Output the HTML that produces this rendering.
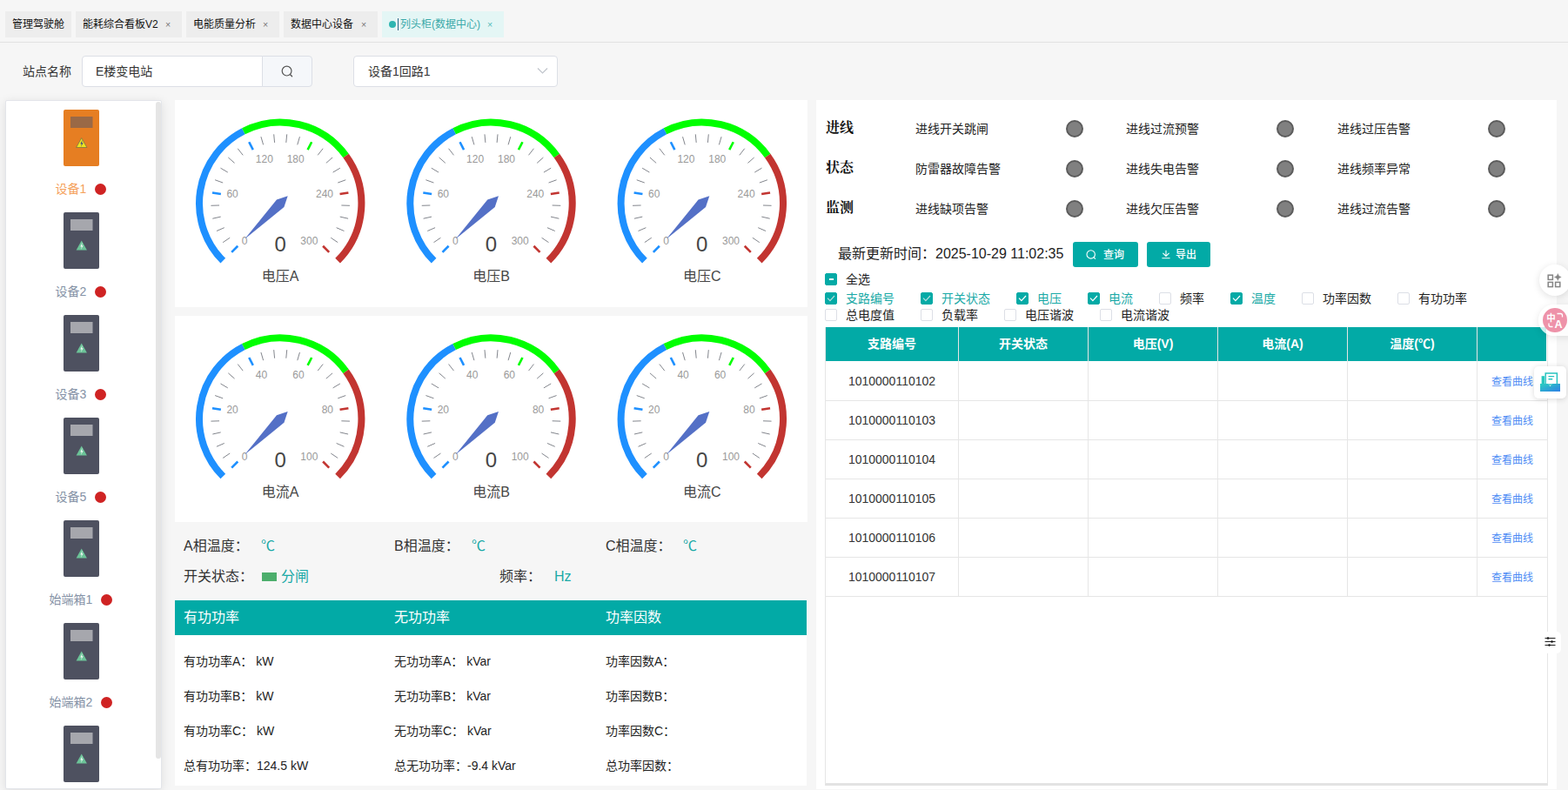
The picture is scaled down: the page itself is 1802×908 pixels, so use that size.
<!DOCTYPE html>
<html lang="zh-CN"><head><meta charset="utf-8"><title>列头柜(数据中心)</title>
<style>
*{box-sizing:border-box;margin:0;padding:0}
html,body{width:1802px;height:908px;overflow:hidden;background:#f6f6f6}
body{position:relative;font-family:"Liberation Sans","Noto Sans CJK SC",sans-serif;font-size:14px;color:#333}
.abs{position:absolute}
.t{position:absolute;white-space:nowrap}
.tab{position:absolute;top:13px;height:30px;line-height:30px;background:#ededed;font-size:12px;color:#111;padding-left:8px;white-space:nowrap}
.tab b{font-weight:normal;color:#777;position:absolute;top:0;font-size:10.5px}
.panel{position:absolute;background:#fff}
.dl{position:absolute;left:7px;width:172px;height:21px;line-height:21px;font-size:14px;text-align:center;white-space:nowrap}
.dl span{display:inline-block;vertical-align:middle}
.dl i{display:inline-block;width:13px;height:13px;border-radius:50%;background:#cf2323;margin-left:10px;vertical-align:middle}
.lamp{position:absolute;width:20px;height:20px;border-radius:50%;background:#808080;border:2px solid #5c5c5c}
.cb{position:absolute;width:14px;height:14px;border:1px solid #dcdfe6;border-radius:2px;background:#fff}
.cb.on{background:#02aaa6;border-color:#02aaa6}
.cl{position:absolute;font-size:14px;line-height:20px;height:20px;white-space:nowrap;color:#222}
.cl.on{color:#1aa9a6}
.btn{position:absolute;top:278px;height:29px;background:#02aaa6;border-radius:3px;color:#fff;font-size:12px;font-weight:500;line-height:31px;white-space:nowrap}
.th{position:absolute;top:376px;height:39px;line-height:39px;color:#fff;font-weight:bold;font-size:14px;text-align:center;background:#02aaa6}
.td{position:absolute;height:45px;line-height:44px;text-align:center;font-size:14px;color:#333;border-right:1px solid #e6e6e6;border-bottom:1px solid #e6e6e6;background:#fff}
.lk{color:#4d8cf5;font-size:12px}
</style></head><body>

<div class="abs" style="left:0;top:48px;width:1802px;height:1px;background:#e2e2e2"></div>
<div class="tab" style="left:6px;width:76px">管理驾驶舱</div>
<div class="tab" style="left:87px;width:122px">能耗综合看板V2<b style="left:103px">×</b></div>
<div class="tab" style="left:214px;width:107px">电能质量分析<b style="left:88px">×</b></div>
<div class="tab" style="left:326px;width:108px">数据中心设备<b style="left:89px">×</b></div>
<div class="tab" style="left:439px;width:140px;background:#e4f6f5;color:#3aa9a9;padding-left:21px"><span class="abs" style="left:8px;top:11px;width:8px;height:8px;border-radius:50%;background:#2fb5b1"></span><span class="abs" style="left:18px;top:8px;width:1px;height:14px;background:#1d6080;box-shadow:0 0 0 .6px rgba(255,255,255,.9)"></span>列头柜(数据中心)<b style="left:121px;color:#5bb">×</b></div>
<div class="t" style="left:26px;top:72px;height:20px;line-height:20px;font-size:14px;color:#333">站点名称</div>
<div class="abs" style="left:94px;top:64px;width:208px;height:36px;background:#fff;border:1px solid #dcdfe6;border-radius:4px 0 0 4px"></div>
<div class="t" style="left:110px;top:72px;height:20px;line-height:20px;font-size:14px;color:#333">E楼变电站</div>
<div class="abs" style="left:301px;top:64px;width:58px;height:36px;background:#f5f7fa;border:1px solid #dcdfe6;border-radius:0 4px 4px 0"></div>
<svg class="abs" style="left:322px;top:74px" width="16" height="16" viewBox="0 0 16 16"><circle cx="7.6" cy="7.6" r="5.4" fill="none" stroke="#555" stroke-width="1.2"/><path d="M11.6 11.8L13.6 13.8" stroke="#555" stroke-width="1.3" stroke-linecap="round"/></svg>
<div class="abs" style="left:406px;top:64px;width:235px;height:36px;background:#fff;border:1px solid #dcdfe6;border-radius:4px"></div>
<div class="t" style="left:423px;top:72px;height:20px;line-height:20px;font-size:14px;color:#333">设备1回路1</div>
<svg class="abs" style="left:617px;top:77px" width="13" height="9" viewBox="0 0 13 9"><path d="M1 1.5L6.5 7L12 1.5" fill="none" stroke="#c0c4cc" stroke-width="1.2"/></svg>
<div class="panel" style="left:6px;top:115px;width:180px;height:792px;border:1px solid #e3e5ea;border-radius:2px;box-shadow:0 2px 12px rgba(0,0,0,.1)"></div>
<div class="abs" style="left:179px;top:117px;width:6px;height:755px;background:#e5e5e5;border-radius:3px"></div>
<svg style="position:absolute;left:73px;top:126px" width="41" height="65" viewBox="0 0 41 65"><rect width="41" height="65" rx="2" fill="#e67e22"/><rect x="8" y="8" width="25.5" height="13" fill="#9a6946"/><path d="M20.7 32.6L26.9 43.5H14.6Z" fill="#efe41f" stroke="#6b6b4a" stroke-width="0.7" stroke-linejoin="round"/><path d="M21.6 34.8L19.3 39.6H20.9L19.9 42.9L22.6 38.2H21.1Z" fill="#3b4a8c"/></svg><div class="dl" style="top:206px;color:#f5a15b"><span>设备1</span><i></i></div>
<svg style="position:absolute;left:73px;top:244px" width="41" height="65" viewBox="0 0 41 65"><rect width="41" height="65" rx="2" fill="#4e5160"/><rect x="8" y="8" width="25.5" height="13" fill="#a6a7ad"/><path d="M20.7 32.6L26.9 43.5H14.6Z" fill="#6cc398" stroke="none" stroke-width="0.7" stroke-linejoin="round"/><path d="M21.6 34.8L19.3 39.6H20.9L19.9 42.9L22.6 38.2H21.1Z" fill="#f4fbf7"/></svg><div class="dl" style="top:324px;color:#8592a6"><span>设备2</span><i></i></div>
<svg style="position:absolute;left:73px;top:362px" width="41" height="65" viewBox="0 0 41 65"><rect width="41" height="65" rx="2" fill="#4e5160"/><rect x="8" y="8" width="25.5" height="13" fill="#a6a7ad"/><path d="M20.7 32.6L26.9 43.5H14.6Z" fill="#6cc398" stroke="none" stroke-width="0.7" stroke-linejoin="round"/><path d="M21.6 34.8L19.3 39.6H20.9L19.9 42.9L22.6 38.2H21.1Z" fill="#f4fbf7"/></svg><div class="dl" style="top:442px;color:#8592a6"><span>设备3</span><i></i></div>
<svg style="position:absolute;left:73px;top:480px" width="41" height="65" viewBox="0 0 41 65"><rect width="41" height="65" rx="2" fill="#4e5160"/><rect x="8" y="8" width="25.5" height="13" fill="#a6a7ad"/><path d="M20.7 32.6L26.9 43.5H14.6Z" fill="#6cc398" stroke="none" stroke-width="0.7" stroke-linejoin="round"/><path d="M21.6 34.8L19.3 39.6H20.9L19.9 42.9L22.6 38.2H21.1Z" fill="#f4fbf7"/></svg><div class="dl" style="top:560px;color:#8592a6"><span>设备5</span><i></i></div>
<svg style="position:absolute;left:73px;top:598px" width="41" height="65" viewBox="0 0 41 65"><rect width="41" height="65" rx="2" fill="#4e5160"/><rect x="8" y="8" width="25.5" height="13" fill="#a6a7ad"/><path d="M20.7 32.6L26.9 43.5H14.6Z" fill="#6cc398" stroke="none" stroke-width="0.7" stroke-linejoin="round"/><path d="M21.6 34.8L19.3 39.6H20.9L19.9 42.9L22.6 38.2H21.1Z" fill="#f4fbf7"/></svg><div class="dl" style="top:678px;color:#8592a6"><span>始端箱1</span><i></i></div>
<svg style="position:absolute;left:73px;top:716px" width="41" height="65" viewBox="0 0 41 65"><rect width="41" height="65" rx="2" fill="#4e5160"/><rect x="8" y="8" width="25.5" height="13" fill="#a6a7ad"/><path d="M20.7 32.6L26.9 43.5H14.6Z" fill="#6cc398" stroke="none" stroke-width="0.7" stroke-linejoin="round"/><path d="M21.6 34.8L19.3 39.6H20.9L19.9 42.9L22.6 38.2H21.1Z" fill="#f4fbf7"/></svg><div class="dl" style="top:796px;color:#8592a6"><span>始端箱2</span><i></i></div>
<svg style="position:absolute;left:73px;top:834px" width="41" height="65" viewBox="0 0 41 65"><rect width="41" height="65" rx="2" fill="#4e5160"/><rect x="8" y="8" width="25.5" height="13" fill="#a6a7ad"/><path d="M20.7 32.6L26.9 43.5H14.6Z" fill="#6cc398" stroke="none" stroke-width="0.7" stroke-linejoin="round"/><path d="M21.6 34.8L19.3 39.6H20.9L19.9 42.9L22.6 38.2H21.1Z" fill="#f4fbf7"/></svg>
<div class="panel" style="left:201px;top:115px;width:727px;height:237.5px"></div>
<div class="panel" style="left:201px;top:363px;width:727px;height:237px"></div>
<svg class="gsvg" width="1802" height="908" viewBox="0 0 1802 908" style="position:absolute;left:0;top:0;font-family:'Liberation Sans','Noto Sans CJK SC',sans-serif">
<path d="M256.30 299.70A93.20 93.20 0 0 1 279.89 150.76" fill="none" stroke="#1e90ff" stroke-width="8.0"/>
<path d="M279.89 150.76A93.20 93.20 0 0 1 397.60 179.02" fill="none" stroke="#00ff00" stroke-width="8.0"/>
<path d="M397.60 179.02A93.20 93.20 0 0 1 388.10 299.70" fill="none" stroke="#c23531" stroke-width="8.0"/>
<path d="M256.20 278.65L264.14 273.26M248.96 265.49L257.77 261.68M244.32 251.21L253.69 249.11M242.44 236.31L252.03 236.01M247.12 206.77L256.15 210.02M253.51 193.18L261.78 198.07M262.34 181.03L269.54 187.38M273.29 170.75L279.17 178.33M299.94 157.17L302.61 166.39M314.69 154.35L315.59 163.91M329.71 154.35L328.81 163.91M344.46 157.17L341.79 166.39M371.11 170.75L365.23 178.33M382.06 181.03L374.86 187.38M390.89 193.18L382.62 198.07M397.28 206.77L388.25 210.02M401.96 236.31L392.37 236.01M400.08 251.21L390.71 249.11M395.44 265.49L386.63 261.68M388.20 278.65L380.26 273.26" stroke="#74777f" stroke-width="0.9" fill="none"/>
<path d="M266.20 289.80L273.27 282.73" stroke="#1e90ff" stroke-width="2.6" fill="none"/>
<path d="M243.98 221.41L253.85 222.97" stroke="#1e90ff" stroke-width="2.6" fill="none"/>
<path d="M286.24 163.23L290.78 172.14" stroke="#1e90ff" stroke-width="2.6" fill="none"/>
<path d="M358.16 163.23L353.62 172.14" stroke="#00ff00" stroke-width="2.6" fill="none"/>
<path d="M400.42 221.41L390.55 222.97" stroke="#c23531" stroke-width="2.6" fill="none"/>
<path d="M378.20 289.80L371.13 282.73" stroke="#c23531" stroke-width="2.6" fill="none"/>
<text x="277.7" y="281.1" text-anchor="start" font-size="12" fill="#999">0</text>
<text x="260.4" y="226.7" text-anchor="start" font-size="12" fill="#999">60</text>
<text x="293.8" y="186.7" text-anchor="start" font-size="12" fill="#999">120</text>
<text x="349.7" y="186.7" text-anchor="end" font-size="12" fill="#999">180</text>
<text x="383.0" y="226.7" text-anchor="end" font-size="12" fill="#999">240</text>
<text x="365.4" y="281.1" text-anchor="end" font-size="12" fill="#999">300</text>
<path d="M330.69 225.31L317.96 229.56L281.19 274.81L326.44 238.04Z" fill="#5470c6"/>
<text x="322.2" y="289.3" text-anchor="middle" font-size="24" fill="#464646">0</text>
<text x="322.2" y="323.3" text-anchor="middle" font-size="16" fill="#464646">电压A</text>
<path d="M498.60 299.70A93.20 93.20 0 0 1 522.19 150.76" fill="none" stroke="#1e90ff" stroke-width="8.0"/>
<path d="M522.19 150.76A93.20 93.20 0 0 1 639.90 179.02" fill="none" stroke="#00ff00" stroke-width="8.0"/>
<path d="M639.90 179.02A93.20 93.20 0 0 1 630.40 299.70" fill="none" stroke="#c23531" stroke-width="8.0"/>
<path d="M498.50 278.65L506.44 273.26M491.26 265.49L500.07 261.68M486.62 251.21L495.99 249.11M484.74 236.31L494.33 236.01M489.42 206.77L498.45 210.02M495.81 193.18L504.08 198.07M504.64 181.03L511.84 187.38M515.59 170.75L521.47 178.33M542.24 157.17L544.91 166.39M556.99 154.35L557.89 163.91M572.01 154.35L571.11 163.91M586.76 157.17L584.09 166.39M613.41 170.75L607.53 178.33M624.36 181.03L617.16 187.38M633.19 193.18L624.92 198.07M639.58 206.77L630.55 210.02M644.26 236.31L634.67 236.01M642.38 251.21L633.01 249.11M637.74 265.49L628.93 261.68M630.50 278.65L622.56 273.26" stroke="#74777f" stroke-width="0.9" fill="none"/>
<path d="M508.50 289.80L515.57 282.73" stroke="#1e90ff" stroke-width="2.6" fill="none"/>
<path d="M486.28 221.41L496.15 222.97" stroke="#1e90ff" stroke-width="2.6" fill="none"/>
<path d="M528.54 163.23L533.08 172.14" stroke="#1e90ff" stroke-width="2.6" fill="none"/>
<path d="M600.46 163.23L595.92 172.14" stroke="#00ff00" stroke-width="2.6" fill="none"/>
<path d="M642.72 221.41L632.85 222.97" stroke="#c23531" stroke-width="2.6" fill="none"/>
<path d="M620.50 289.80L613.43 282.73" stroke="#c23531" stroke-width="2.6" fill="none"/>
<text x="520.0" y="281.1" text-anchor="start" font-size="12" fill="#999">0</text>
<text x="502.7" y="226.7" text-anchor="start" font-size="12" fill="#999">60</text>
<text x="536.1" y="186.7" text-anchor="start" font-size="12" fill="#999">120</text>
<text x="592.0" y="186.7" text-anchor="end" font-size="12" fill="#999">180</text>
<text x="625.3" y="226.7" text-anchor="end" font-size="12" fill="#999">240</text>
<text x="607.7" y="281.1" text-anchor="end" font-size="12" fill="#999">300</text>
<path d="M572.99 225.31L560.26 229.56L523.49 274.81L568.74 238.04Z" fill="#5470c6"/>
<text x="564.5" y="289.3" text-anchor="middle" font-size="24" fill="#464646">0</text>
<text x="564.5" y="323.3" text-anchor="middle" font-size="16" fill="#464646">电压B</text>
<path d="M740.90 299.70A93.20 93.20 0 0 1 764.49 150.76" fill="none" stroke="#1e90ff" stroke-width="8.0"/>
<path d="M764.49 150.76A93.20 93.20 0 0 1 882.20 179.02" fill="none" stroke="#00ff00" stroke-width="8.0"/>
<path d="M882.20 179.02A93.20 93.20 0 0 1 872.70 299.70" fill="none" stroke="#c23531" stroke-width="8.0"/>
<path d="M740.80 278.65L748.74 273.26M733.56 265.49L742.37 261.68M728.92 251.21L738.29 249.11M727.04 236.31L736.63 236.01M731.72 206.77L740.75 210.02M738.11 193.18L746.38 198.07M746.94 181.03L754.14 187.38M757.89 170.75L763.77 178.33M784.54 157.17L787.21 166.39M799.29 154.35L800.19 163.91M814.31 154.35L813.41 163.91M829.06 157.17L826.39 166.39M855.71 170.75L849.83 178.33M866.66 181.03L859.46 187.38M875.49 193.18L867.22 198.07M881.88 206.77L872.85 210.02M886.56 236.31L876.97 236.01M884.68 251.21L875.31 249.11M880.04 265.49L871.23 261.68M872.80 278.65L864.86 273.26" stroke="#74777f" stroke-width="0.9" fill="none"/>
<path d="M750.80 289.80L757.87 282.73" stroke="#1e90ff" stroke-width="2.6" fill="none"/>
<path d="M728.58 221.41L738.45 222.97" stroke="#1e90ff" stroke-width="2.6" fill="none"/>
<path d="M770.84 163.23L775.38 172.14" stroke="#1e90ff" stroke-width="2.6" fill="none"/>
<path d="M842.76 163.23L838.22 172.14" stroke="#00ff00" stroke-width="2.6" fill="none"/>
<path d="M885.02 221.41L875.15 222.97" stroke="#c23531" stroke-width="2.6" fill="none"/>
<path d="M862.80 289.80L855.73 282.73" stroke="#c23531" stroke-width="2.6" fill="none"/>
<text x="762.3" y="281.1" text-anchor="start" font-size="12" fill="#999">0</text>
<text x="745.0" y="226.7" text-anchor="start" font-size="12" fill="#999">60</text>
<text x="778.4" y="186.7" text-anchor="start" font-size="12" fill="#999">120</text>
<text x="834.3" y="186.7" text-anchor="end" font-size="12" fill="#999">180</text>
<text x="867.6" y="226.7" text-anchor="end" font-size="12" fill="#999">240</text>
<text x="850.0" y="281.1" text-anchor="end" font-size="12" fill="#999">300</text>
<path d="M815.29 225.31L802.56 229.56L765.79 274.81L811.04 238.04Z" fill="#5470c6"/>
<text x="806.8" y="289.3" text-anchor="middle" font-size="24" fill="#464646">0</text>
<text x="806.8" y="323.3" text-anchor="middle" font-size="16" fill="#464646">电压C</text>
<path d="M256.30 547.50A93.20 93.20 0 0 1 279.89 398.56" fill="none" stroke="#1e90ff" stroke-width="8.0"/>
<path d="M279.89 398.56A93.20 93.20 0 0 1 397.60 426.82" fill="none" stroke="#00ff00" stroke-width="8.0"/>
<path d="M397.60 426.82A93.20 93.20 0 0 1 388.10 547.50" fill="none" stroke="#c23531" stroke-width="8.0"/>
<path d="M256.20 526.45L264.14 521.06M248.96 513.29L257.77 509.48M244.32 499.01L253.69 496.91M242.44 484.11L252.03 483.81M247.12 454.57L256.15 457.82M253.51 440.98L261.78 445.87M262.34 428.83L269.54 435.18M273.29 418.55L279.17 426.13M299.94 404.97L302.61 414.19M314.69 402.15L315.59 411.71M329.71 402.15L328.81 411.71M344.46 404.97L341.79 414.19M371.11 418.55L365.23 426.13M382.06 428.83L374.86 435.18M390.89 440.98L382.62 445.87M397.28 454.57L388.25 457.82M401.96 484.11L392.37 483.81M400.08 499.01L390.71 496.91M395.44 513.29L386.63 509.48M388.20 526.45L380.26 521.06" stroke="#74777f" stroke-width="0.9" fill="none"/>
<path d="M266.20 537.60L273.27 530.53" stroke="#1e90ff" stroke-width="2.6" fill="none"/>
<path d="M243.98 469.21L253.85 470.77" stroke="#1e90ff" stroke-width="2.6" fill="none"/>
<path d="M286.24 411.03L290.78 419.94" stroke="#1e90ff" stroke-width="2.6" fill="none"/>
<path d="M358.16 411.03L353.62 419.94" stroke="#00ff00" stroke-width="2.6" fill="none"/>
<path d="M400.42 469.21L390.55 470.77" stroke="#c23531" stroke-width="2.6" fill="none"/>
<path d="M378.20 537.60L371.13 530.53" stroke="#c23531" stroke-width="2.6" fill="none"/>
<text x="277.7" y="528.9" text-anchor="start" font-size="12" fill="#999">0</text>
<text x="260.4" y="474.5" text-anchor="start" font-size="12" fill="#999">20</text>
<text x="293.8" y="434.5" text-anchor="start" font-size="12" fill="#999">40</text>
<text x="349.7" y="434.5" text-anchor="end" font-size="12" fill="#999">60</text>
<text x="383.0" y="474.5" text-anchor="end" font-size="12" fill="#999">80</text>
<text x="365.4" y="528.9" text-anchor="end" font-size="12" fill="#999">100</text>
<path d="M330.69 473.11L317.96 477.36L281.19 522.61L326.44 485.84Z" fill="#5470c6"/>
<text x="322.2" y="537.1" text-anchor="middle" font-size="24" fill="#464646">0</text>
<text x="322.2" y="571.1" text-anchor="middle" font-size="16" fill="#464646">电流A</text>
<path d="M498.60 547.50A93.20 93.20 0 0 1 522.19 398.56" fill="none" stroke="#1e90ff" stroke-width="8.0"/>
<path d="M522.19 398.56A93.20 93.20 0 0 1 639.90 426.82" fill="none" stroke="#00ff00" stroke-width="8.0"/>
<path d="M639.90 426.82A93.20 93.20 0 0 1 630.40 547.50" fill="none" stroke="#c23531" stroke-width="8.0"/>
<path d="M498.50 526.45L506.44 521.06M491.26 513.29L500.07 509.48M486.62 499.01L495.99 496.91M484.74 484.11L494.33 483.81M489.42 454.57L498.45 457.82M495.81 440.98L504.08 445.87M504.64 428.83L511.84 435.18M515.59 418.55L521.47 426.13M542.24 404.97L544.91 414.19M556.99 402.15L557.89 411.71M572.01 402.15L571.11 411.71M586.76 404.97L584.09 414.19M613.41 418.55L607.53 426.13M624.36 428.83L617.16 435.18M633.19 440.98L624.92 445.87M639.58 454.57L630.55 457.82M644.26 484.11L634.67 483.81M642.38 499.01L633.01 496.91M637.74 513.29L628.93 509.48M630.50 526.45L622.56 521.06" stroke="#74777f" stroke-width="0.9" fill="none"/>
<path d="M508.50 537.60L515.57 530.53" stroke="#1e90ff" stroke-width="2.6" fill="none"/>
<path d="M486.28 469.21L496.15 470.77" stroke="#1e90ff" stroke-width="2.6" fill="none"/>
<path d="M528.54 411.03L533.08 419.94" stroke="#1e90ff" stroke-width="2.6" fill="none"/>
<path d="M600.46 411.03L595.92 419.94" stroke="#00ff00" stroke-width="2.6" fill="none"/>
<path d="M642.72 469.21L632.85 470.77" stroke="#c23531" stroke-width="2.6" fill="none"/>
<path d="M620.50 537.60L613.43 530.53" stroke="#c23531" stroke-width="2.6" fill="none"/>
<text x="520.0" y="528.9" text-anchor="start" font-size="12" fill="#999">0</text>
<text x="502.7" y="474.5" text-anchor="start" font-size="12" fill="#999">20</text>
<text x="536.1" y="434.5" text-anchor="start" font-size="12" fill="#999">40</text>
<text x="592.0" y="434.5" text-anchor="end" font-size="12" fill="#999">60</text>
<text x="625.3" y="474.5" text-anchor="end" font-size="12" fill="#999">80</text>
<text x="607.7" y="528.9" text-anchor="end" font-size="12" fill="#999">100</text>
<path d="M572.99 473.11L560.26 477.36L523.49 522.61L568.74 485.84Z" fill="#5470c6"/>
<text x="564.5" y="537.1" text-anchor="middle" font-size="24" fill="#464646">0</text>
<text x="564.5" y="571.1" text-anchor="middle" font-size="16" fill="#464646">电流B</text>
<path d="M740.90 547.50A93.20 93.20 0 0 1 764.49 398.56" fill="none" stroke="#1e90ff" stroke-width="8.0"/>
<path d="M764.49 398.56A93.20 93.20 0 0 1 882.20 426.82" fill="none" stroke="#00ff00" stroke-width="8.0"/>
<path d="M882.20 426.82A93.20 93.20 0 0 1 872.70 547.50" fill="none" stroke="#c23531" stroke-width="8.0"/>
<path d="M740.80 526.45L748.74 521.06M733.56 513.29L742.37 509.48M728.92 499.01L738.29 496.91M727.04 484.11L736.63 483.81M731.72 454.57L740.75 457.82M738.11 440.98L746.38 445.87M746.94 428.83L754.14 435.18M757.89 418.55L763.77 426.13M784.54 404.97L787.21 414.19M799.29 402.15L800.19 411.71M814.31 402.15L813.41 411.71M829.06 404.97L826.39 414.19M855.71 418.55L849.83 426.13M866.66 428.83L859.46 435.18M875.49 440.98L867.22 445.87M881.88 454.57L872.85 457.82M886.56 484.11L876.97 483.81M884.68 499.01L875.31 496.91M880.04 513.29L871.23 509.48M872.80 526.45L864.86 521.06" stroke="#74777f" stroke-width="0.9" fill="none"/>
<path d="M750.80 537.60L757.87 530.53" stroke="#1e90ff" stroke-width="2.6" fill="none"/>
<path d="M728.58 469.21L738.45 470.77" stroke="#1e90ff" stroke-width="2.6" fill="none"/>
<path d="M770.84 411.03L775.38 419.94" stroke="#1e90ff" stroke-width="2.6" fill="none"/>
<path d="M842.76 411.03L838.22 419.94" stroke="#00ff00" stroke-width="2.6" fill="none"/>
<path d="M885.02 469.21L875.15 470.77" stroke="#c23531" stroke-width="2.6" fill="none"/>
<path d="M862.80 537.60L855.73 530.53" stroke="#c23531" stroke-width="2.6" fill="none"/>
<text x="762.3" y="528.9" text-anchor="start" font-size="12" fill="#999">0</text>
<text x="745.0" y="474.5" text-anchor="start" font-size="12" fill="#999">20</text>
<text x="778.4" y="434.5" text-anchor="start" font-size="12" fill="#999">40</text>
<text x="834.3" y="434.5" text-anchor="end" font-size="12" fill="#999">60</text>
<text x="867.6" y="474.5" text-anchor="end" font-size="12" fill="#999">80</text>
<text x="850.0" y="528.9" text-anchor="end" font-size="12" fill="#999">100</text>
<path d="M815.29 473.11L802.56 477.36L765.79 522.61L811.04 485.84Z" fill="#5470c6"/>
<text x="806.8" y="537.1" text-anchor="middle" font-size="24" fill="#464646">0</text>
<text x="806.8" y="571.1" text-anchor="middle" font-size="16" fill="#464646">电流C</text>
</svg>
<div class="t" style="left:211px;top:616.5px;height:22px;line-height:22px;font-size:16px;color:#333">A相温度：</div>
<div class="t" style="left:300px;top:616.5px;height:22px;line-height:22px;font-size:16px;color:#1aa9a6">℃</div>
<div class="t" style="left:453px;top:616.5px;height:22px;line-height:22px;font-size:16px;color:#333">B相温度：</div>
<div class="t" style="left:542px;top:616.5px;height:22px;line-height:22px;font-size:16px;color:#1aa9a6">℃</div>
<div class="t" style="left:696px;top:616.5px;height:22px;line-height:22px;font-size:16px;color:#333">C相温度：</div>
<div class="t" style="left:785px;top:616.5px;height:22px;line-height:22px;font-size:16px;color:#1aa9a6">℃</div>
<div class="t" style="left:211px;top:652.0px;height:22px;line-height:22px;font-size:16px;color:#333">开关状态：</div>
<div class="abs" style="left:301px;top:658px;width:17px;height:10px;background:#4cae6c"></div>
<div class="t" style="left:323px;top:652.0px;height:22px;line-height:22px;font-size:16px;color:#1aa9a6">分闸</div>
<div class="t" style="left:574px;top:652.0px;height:22px;line-height:22px;font-size:16px;color:#333">频率：</div>
<div class="t" style="left:637px;top:652.0px;height:22px;line-height:22px;font-size:16px;color:#1aa9a6">Hz</div>
<div class="abs" style="left:201px;top:690px;width:726px;height:40px;background:#02aaa6"></div>
<div class="t" style="left:211px;top:699px;height:22px;line-height:22px;font-size:16px;color:#fff">有功功率</div>
<div class="t" style="left:453px;top:699px;height:22px;line-height:22px;font-size:16px;color:#fff">无功功率</div>
<div class="t" style="left:696px;top:699px;height:22px;line-height:22px;font-size:16px;color:#fff">功率因数</div>
<div class="panel" style="left:201px;top:730px;width:726px;height:173px"></div>
<div class="t" style="left:211px;top:750px;height:20px;line-height:20px;font-size:14px;color:#222">有功功率A： kW</div>
<div class="t" style="left:453px;top:750px;height:20px;line-height:20px;font-size:14px;color:#222">无功功率A： kVar</div>
<div class="t" style="left:696px;top:750px;height:20px;line-height:20px;font-size:14px;color:#222">功率因数A：</div>
<div class="t" style="left:211px;top:790px;height:20px;line-height:20px;font-size:14px;color:#222">有功功率B： kW</div>
<div class="t" style="left:453px;top:790px;height:20px;line-height:20px;font-size:14px;color:#222">无功功率B： kVar</div>
<div class="t" style="left:696px;top:790px;height:20px;line-height:20px;font-size:14px;color:#222">功率因数B：</div>
<div class="t" style="left:211px;top:830px;height:20px;line-height:20px;font-size:14px;color:#222">有功功率C： kW</div>
<div class="t" style="left:453px;top:830px;height:20px;line-height:20px;font-size:14px;color:#222">无功功率C： kVar</div>
<div class="t" style="left:696px;top:830px;height:20px;line-height:20px;font-size:14px;color:#222">功率因数C：</div>
<div class="t" style="left:211px;top:870px;height:20px;line-height:20px;font-size:14px;color:#222">总有功功率：124.5 kW</div>
<div class="t" style="left:453px;top:870px;height:20px;line-height:20px;font-size:14px;color:#222">总无功功率：-9.4 kVar</div>
<div class="t" style="left:696px;top:870px;height:20px;line-height:20px;font-size:14px;color:#222">总功率因数：</div>
<div class="panel" style="left:938px;top:115px;width:851px;height:792px"></div>
<div class="t" style="left:949px;top:135.5px;height:22px;line-height:22px;font-size:16px;font-weight:bold;color:#111;font-family:'Liberation Serif','Noto Serif CJK SC',serif">进线</div>
<div class="t" style="left:949px;top:181.7px;height:22px;line-height:22px;font-size:16px;font-weight:bold;color:#111;font-family:'Liberation Serif','Noto Serif CJK SC',serif">状态</div>
<div class="t" style="left:949px;top:227.9px;height:22px;line-height:22px;font-size:16px;font-weight:bold;color:#111;font-family:'Liberation Serif','Noto Serif CJK SC',serif">监测</div>
<div class="t" style="left:1052px;top:138px;height:20px;line-height:20px;font-size:14px;color:#222">进线开关跳闸</div>
<div class="lamp" style="left:1225px;top:138px"></div>
<div class="t" style="left:1294px;top:138px;height:20px;line-height:20px;font-size:14px;color:#222">进线过流预警</div>
<div class="lamp" style="left:1467px;top:138px"></div>
<div class="t" style="left:1537px;top:138px;height:20px;line-height:20px;font-size:14px;color:#222">进线过压告警</div>
<div class="lamp" style="left:1710px;top:138px"></div>
<div class="t" style="left:1052px;top:184px;height:20px;line-height:20px;font-size:14px;color:#222">防雷器故障告警</div>
<div class="lamp" style="left:1225px;top:184px"></div>
<div class="t" style="left:1294px;top:184px;height:20px;line-height:20px;font-size:14px;color:#222">进线失电告警</div>
<div class="lamp" style="left:1467px;top:184px"></div>
<div class="t" style="left:1537px;top:184px;height:20px;line-height:20px;font-size:14px;color:#222">进线频率异常</div>
<div class="lamp" style="left:1710px;top:184px"></div>
<div class="t" style="left:1052px;top:230px;height:20px;line-height:20px;font-size:14px;color:#222">进线缺项告警</div>
<div class="lamp" style="left:1225px;top:230px"></div>
<div class="t" style="left:1294px;top:230px;height:20px;line-height:20px;font-size:14px;color:#222">进线欠压告警</div>
<div class="lamp" style="left:1467px;top:230px"></div>
<div class="t" style="left:1537px;top:230px;height:20px;line-height:20px;font-size:14px;color:#222">进线过流告警</div>
<div class="lamp" style="left:1710px;top:230px"></div>
<div class="t" style="left:963px;top:281px;height:22px;line-height:22px;font-size:16px;color:#222">最新更新时间：2025-10-29 11:02:35</div>
<div class="btn" style="left:1233px;width:75px"><svg class="abs" style="left:15px;top:9px" width="12" height="12" viewBox="0 0 12 12"><circle cx="5.7" cy="5.4" r="4.7" fill="none" stroke="#fff" stroke-width="1.1"/><path d="M9.2 8.9L10.6 10.3" stroke="#fff" stroke-width="1.1" stroke-linecap="round"/></svg><span class="abs" style="left:35px;top:0">查询</span></div>
<div class="btn" style="left:1318px;width:73px"><svg class="abs" style="left:16px;top:9px" width="12" height="12" viewBox="0 0 12 12"><path d="M6 0.8V7.2M2.4 3.9L6 7.5L9.6 3.9M1.4 9.7H10.6" fill="none" stroke="#fff" stroke-width="1.1"/></svg><span class="abs" style="left:33px;top:0">导出</span></div>
<div class="cb on" style="left:948px;top:314px"><span class="abs" style="left:3.5px;top:5px;width:5px;height:2px;background:#fff"></span></div><div class="cl" style="left:972px;top:311px">全选</div>
<div class="cb on" style="left:948px;top:336px"><svg width="12" height="12" viewBox="0 0 12 12" style="position:absolute;left:0;top:0"><path d="M2.0 5.7L4.9 8.6L10 3.0" fill="none" stroke="#b5dedd" stroke-width="1.2"/></svg></div><div class="cl on" style="left:972px;top:333px">支路编号</div>
<div class="cb on" style="left:1058px;top:336px"><svg width="12" height="12" viewBox="0 0 12 12" style="position:absolute;left:0;top:0"><path d="M2.0 5.7L4.9 8.6L10 3.0" fill="none" stroke="#b5dedd" stroke-width="1.2"/></svg></div><div class="cl on" style="left:1082px;top:333px">开关状态</div>
<div class="cb on" style="left:1168px;top:336px"><svg width="12" height="12" viewBox="0 0 12 12" style="position:absolute;left:0;top:0"><path d="M2.0 5.7L4.9 8.6L10 3.0" fill="none" stroke="#fff" stroke-width="1.2"/></svg></div><div class="cl on" style="left:1192px;top:333px">电压</div>
<div class="cb on" style="left:1250px;top:336px"><svg width="12" height="12" viewBox="0 0 12 12" style="position:absolute;left:0;top:0"><path d="M2.0 5.7L4.9 8.6L10 3.0" fill="none" stroke="#fff" stroke-width="1.2"/></svg></div><div class="cl on" style="left:1274px;top:333px">电流</div>
<div class="cb" style="left:1332px;top:336px"></div><div class="cl" style="left:1356px;top:333px">频率</div>
<div class="cb on" style="left:1414px;top:336px"><svg width="12" height="12" viewBox="0 0 12 12" style="position:absolute;left:0;top:0"><path d="M2.0 5.7L4.9 8.6L10 3.0" fill="none" stroke="#fff" stroke-width="1.2"/></svg></div><div class="cl on" style="left:1438px;top:333px">温度</div>
<div class="cb" style="left:1496px;top:336px"></div><div class="cl" style="left:1520px;top:333px">功率因数</div>
<div class="cb" style="left:1606px;top:336px"></div><div class="cl" style="left:1630px;top:333px">有功功率</div>
<div class="cb" style="left:948px;top:355px"></div><div class="cl" style="left:972px;top:352px">总电度值</div>
<div class="cb" style="left:1058px;top:355px"></div><div class="cl" style="left:1082px;top:352px">负载率</div>
<div class="cb" style="left:1154px;top:355px"></div><div class="cl" style="left:1178px;top:352px">电压谐波</div>
<div class="cb" style="left:1264px;top:355px"></div><div class="cl" style="left:1288px;top:352px">电流谐波</div>
<div class="abs" style="left:948px;top:376px;width:831px;height:527px;background:#fff;border-left:1px solid #e6e6e6;border-right:1px solid #e6e6e6;border-bottom:3px solid #e3e3e3"></div>
<div class="th" style="left:949px;width:153px;border-right:1px solid #e6e6e6;">支路编号</div>
<div class="th" style="left:1102px;width:149px;border-right:1px solid #e6e6e6;">开关状态</div>
<div class="th" style="left:1251px;width:149px;border-right:1px solid #e6e6e6;">电压(V)</div>
<div class="th" style="left:1400px;width:149px;border-right:1px solid #e6e6e6;">电流(A)</div>
<div class="th" style="left:1549px;width:149px;border-right:1px solid #e6e6e6;">温度(℃)</div>
<div class="th" style="left:1698px;width:79px;"></div>
<div class="td" style="left:949px;top:415px;width:153px;height:46px;line-height:47px">1010000110102</div>
<div class="td" style="left:1102px;top:415px;width:149px;height:46px;line-height:47px"></div>
<div class="td" style="left:1251px;top:415px;width:149px;height:46px;line-height:47px"></div>
<div class="td" style="left:1400px;top:415px;width:149px;height:46px;line-height:47px"></div>
<div class="td" style="left:1549px;top:415px;width:149px;height:46px;line-height:47px"></div>
<div class="td" style="left:1698px;top:415px;width:80px;height:46px;line-height:47px;border-right:0"><span class="lk">查看曲线</span></div>
<div class="td" style="left:949px;top:461px;width:153px;height:45px;line-height:44px">1010000110103</div>
<div class="td" style="left:1102px;top:461px;width:149px;height:45px;line-height:44px"></div>
<div class="td" style="left:1251px;top:461px;width:149px;height:45px;line-height:44px"></div>
<div class="td" style="left:1400px;top:461px;width:149px;height:45px;line-height:44px"></div>
<div class="td" style="left:1549px;top:461px;width:149px;height:45px;line-height:44px"></div>
<div class="td" style="left:1698px;top:461px;width:80px;height:45px;line-height:44px;border-right:0"><span class="lk">查看曲线</span></div>
<div class="td" style="left:949px;top:506px;width:153px;height:45px;line-height:44px">1010000110104</div>
<div class="td" style="left:1102px;top:506px;width:149px;height:45px;line-height:44px"></div>
<div class="td" style="left:1251px;top:506px;width:149px;height:45px;line-height:44px"></div>
<div class="td" style="left:1400px;top:506px;width:149px;height:45px;line-height:44px"></div>
<div class="td" style="left:1549px;top:506px;width:149px;height:45px;line-height:44px"></div>
<div class="td" style="left:1698px;top:506px;width:80px;height:45px;line-height:44px;border-right:0"><span class="lk">查看曲线</span></div>
<div class="td" style="left:949px;top:551px;width:153px;height:45px;line-height:44px">1010000110105</div>
<div class="td" style="left:1102px;top:551px;width:149px;height:45px;line-height:44px"></div>
<div class="td" style="left:1251px;top:551px;width:149px;height:45px;line-height:44px"></div>
<div class="td" style="left:1400px;top:551px;width:149px;height:45px;line-height:44px"></div>
<div class="td" style="left:1549px;top:551px;width:149px;height:45px;line-height:44px"></div>
<div class="td" style="left:1698px;top:551px;width:80px;height:45px;line-height:44px;border-right:0"><span class="lk">查看曲线</span></div>
<div class="td" style="left:949px;top:596px;width:153px;height:45px;line-height:44px">1010000110106</div>
<div class="td" style="left:1102px;top:596px;width:149px;height:45px;line-height:44px"></div>
<div class="td" style="left:1251px;top:596px;width:149px;height:45px;line-height:44px"></div>
<div class="td" style="left:1400px;top:596px;width:149px;height:45px;line-height:44px"></div>
<div class="td" style="left:1549px;top:596px;width:149px;height:45px;line-height:44px"></div>
<div class="td" style="left:1698px;top:596px;width:80px;height:45px;line-height:44px;border-right:0"><span class="lk">查看曲线</span></div>
<div class="td" style="left:949px;top:641px;width:153px;height:45px;line-height:44px">1010000110107</div>
<div class="td" style="left:1102px;top:641px;width:149px;height:45px;line-height:44px"></div>
<div class="td" style="left:1251px;top:641px;width:149px;height:45px;line-height:44px"></div>
<div class="td" style="left:1400px;top:641px;width:149px;height:45px;line-height:44px"></div>
<div class="td" style="left:1549px;top:641px;width:149px;height:45px;line-height:44px"></div>
<div class="td" style="left:1698px;top:641px;width:80px;height:45px;line-height:44px;border-right:0"><span class="lk">查看曲线</span></div>
<div class="abs" style="left:1769px;top:304px;width:36px;height:36px;border-radius:18px;background:#fff;box-shadow:0 2px 8px rgba(0,0,0,.12)"></div>
<svg class="abs" style="left:1778px;top:314px" width="17" height="17" viewBox="0 0 17 17"><g fill="none" stroke="#858585" stroke-width="1.5"><rect x="1.2" y="2.2" width="5.2" height="5.2"/><rect x="1.2" y="10.4" width="5.2" height="5.2"/><rect x="9.6" y="10.4" width="5.2" height="5.2"/></g><path d="M12.3 0.6Q12.9 3.9 16.2 4.5Q12.9 5.1 12.3 8.4Q11.7 5.1 8.4 4.5Q11.7 3.9 12.3 0.6Z" fill="#858585" stroke="#858585" stroke-width="0.5"/></svg>
<div class="abs" style="left:1768px;top:350px;width:40px;height:36px;border-radius:18px 0 0 18px;background:rgba(255,255,255,.8);box-shadow:0 2px 8px rgba(0,0,0,.1)"></div>
<div class="abs" style="left:1773px;top:354px;width:28px;height:28px;border-radius:50%;background:#ee92a9"></div>
<svg class="abs" style="left:1773px;top:354px;font-family:'Liberation Sans','Noto Sans CJK SC',sans-serif" width="28" height="28" viewBox="0 0 28 28"><text x="4.2" y="14.8" font-size="10.5" font-weight="bold" fill="#fff">中</text><text x="13.6" y="22.6" font-size="12.5" font-weight="bold" fill="#fff">A</text><path d="M16.5 6.5H20.5Q22.5 6.5 22.5 8.5V10.5M11.5 21.5H9Q7 21.5 7 19.5V17.5" fill="none" stroke="#fff" stroke-width="1.3"/></svg>
<div class="abs" style="left:1763px;top:421px;width:37px;height:37px;border-radius:5px;background:#fff;box-shadow:0 1px 6px rgba(0,0,0,.15)"></div>
<svg class="abs" style="left:1769px;top:428px" width="25" height="23" viewBox="0 0 25 23"><defs><linearGradient id="g1" x1="0" y1="0" x2="1" y2="1"><stop offset="0" stop-color="#2ad0c0"/><stop offset="1" stop-color="#2f7fe6"/></linearGradient></defs><path d="M2.6 4.2H6V14H2.6Z" fill="#27c7bd"/><path d="M7.2 0.9H20.4V14H7.2Z" fill="#fff" stroke="#27c4c0" stroke-width="1.5"/><path d="M10.5 4.6H17.2M10.5 7.8H15.2" stroke="#27c4c0" stroke-width="1.4"/><path d="M1 13H9.5L12.5 16L15.5 13H24V22H1Z" fill="url(#g1)"/></svg>
<div class="abs" style="left:1774px;top:726px;width:20px;height:25px;border-radius:5px;background:#fff"></div>
<svg class="abs" style="left:1775px;top:731px" width="13" height="13" viewBox="0 0 13 13"><path d="M0.5 2.5H12.5M0.5 6.5H12.5M0.5 10.5H12.5" stroke="#222" stroke-width="1.1"/><circle cx="4" cy="2.5" r="1.3" fill="#111"/><circle cx="8.5" cy="6.5" r="1.3" fill="#111"/><circle cx="5.5" cy="10.5" r="1.3" fill="#111"/></svg>
</body></html>
